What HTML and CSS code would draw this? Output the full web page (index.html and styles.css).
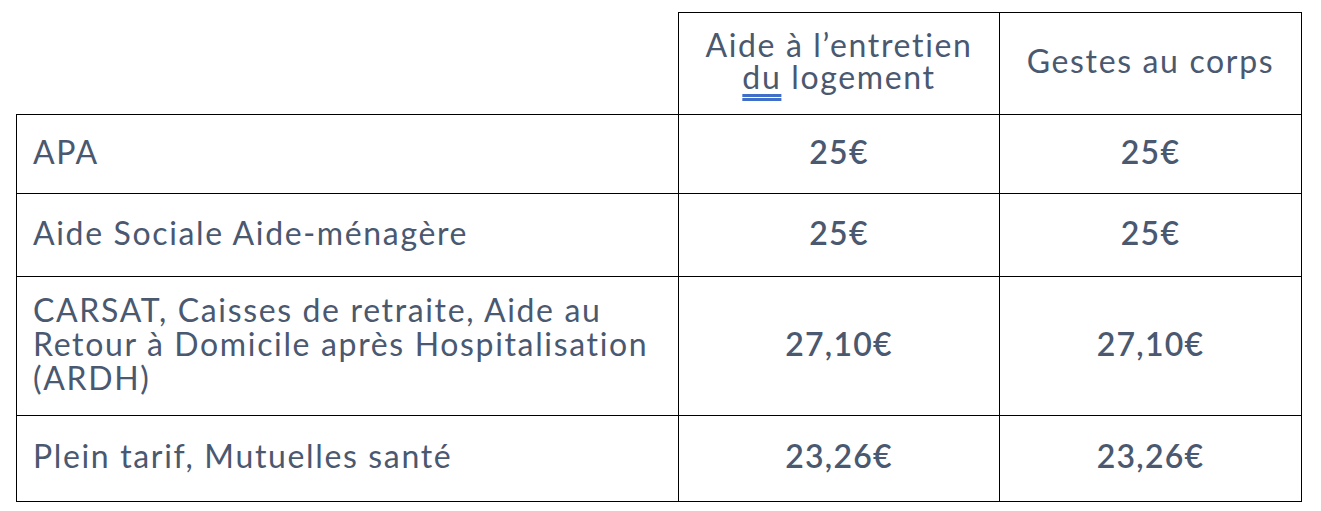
FILE: index.html
```html
<!DOCTYPE html>
<html lang="fr">
<head>
<meta charset="utf-8">
<title>Tarifs</title>
<link rel="stylesheet" href="styles.css">
</head>
<body>
<table class="tarifs">
  <colgroup>
    <col class="c1">
    <col class="c2">
    <col class="c3">
  </colgroup>
  <thead>
    <tr class="r-head">
      <th class="blank"></th>
      <th class="head">Aide à l’entretien<br><span class="spell">du</span> logement</th>
      <th class="head">Gestes au corps</th>
    </tr>
  </thead>
  <tbody>
    <tr class="r1">
      <td class="label">APA</td>
      <td class="price">25€</td>
      <td class="price">25€</td>
    </tr>
    <tr class="r2">
      <td class="label">Aide Sociale Aide-ménagère</td>
      <td class="price">25€</td>
      <td class="price">25€</td>
    </tr>
    <tr class="r3">
      <td class="label">CARSAT, Caisses de retraite, Aide au<br>Retour à Domicile après Hospitalisation<br>(ARDH)</td>
      <td class="price">27,10€</td>
      <td class="price">27,10€</td>
    </tr>
    <tr class="r4">
      <td class="label">Plein tarif, Mutuelles santé</td>
      <td class="price">23,26€</td>
      <td class="price">23,26€</td>
    </tr>
  </tbody>
</table>
</body>
</html>
```
FILE: styles.css
```css
html, body {
  margin: 0;
  padding: 0;
  background: #ffffff;
}
body {
  padding: 12px 0 0 16px;
}
.tarifs {
  border-collapse: collapse;
  table-layout: fixed;
  width: 1285px;
  font-family: "Lato", "Liberation Sans", sans-serif;
  font-size: 32px;
  letter-spacing: 1.65px;
  line-height: 34px;
  color: #4a5870;
}
.c1 { width: 662px; }
.c2 { width: 321px; }
.c3 { width: 302px; }
.tarifs th, .tarifs td {
  border: 1px solid #000;
  padding: 0 16px 5px;
  font-weight: 400;
  vertical-align: middle;
}
.tarifs th.blank {
  border-top: none;
  border-left: none;
}
.head {
  text-align: center;
  line-height: 32px;
}
.label {
  text-align: left;
}
.tarifs td.price {
  text-align: center;
  font-weight: 600;
  letter-spacing: 1.2px;
}
.spell {
  text-decoration: underline double #3f6fc8;
  text-underline-offset: 5px;
}
.r-head { height: 102px; }
.r1 { height: 79px; }
.r2 { height: 83px; }
.r3 { height: 139px; }
.r4 { height: 86px; }
```
